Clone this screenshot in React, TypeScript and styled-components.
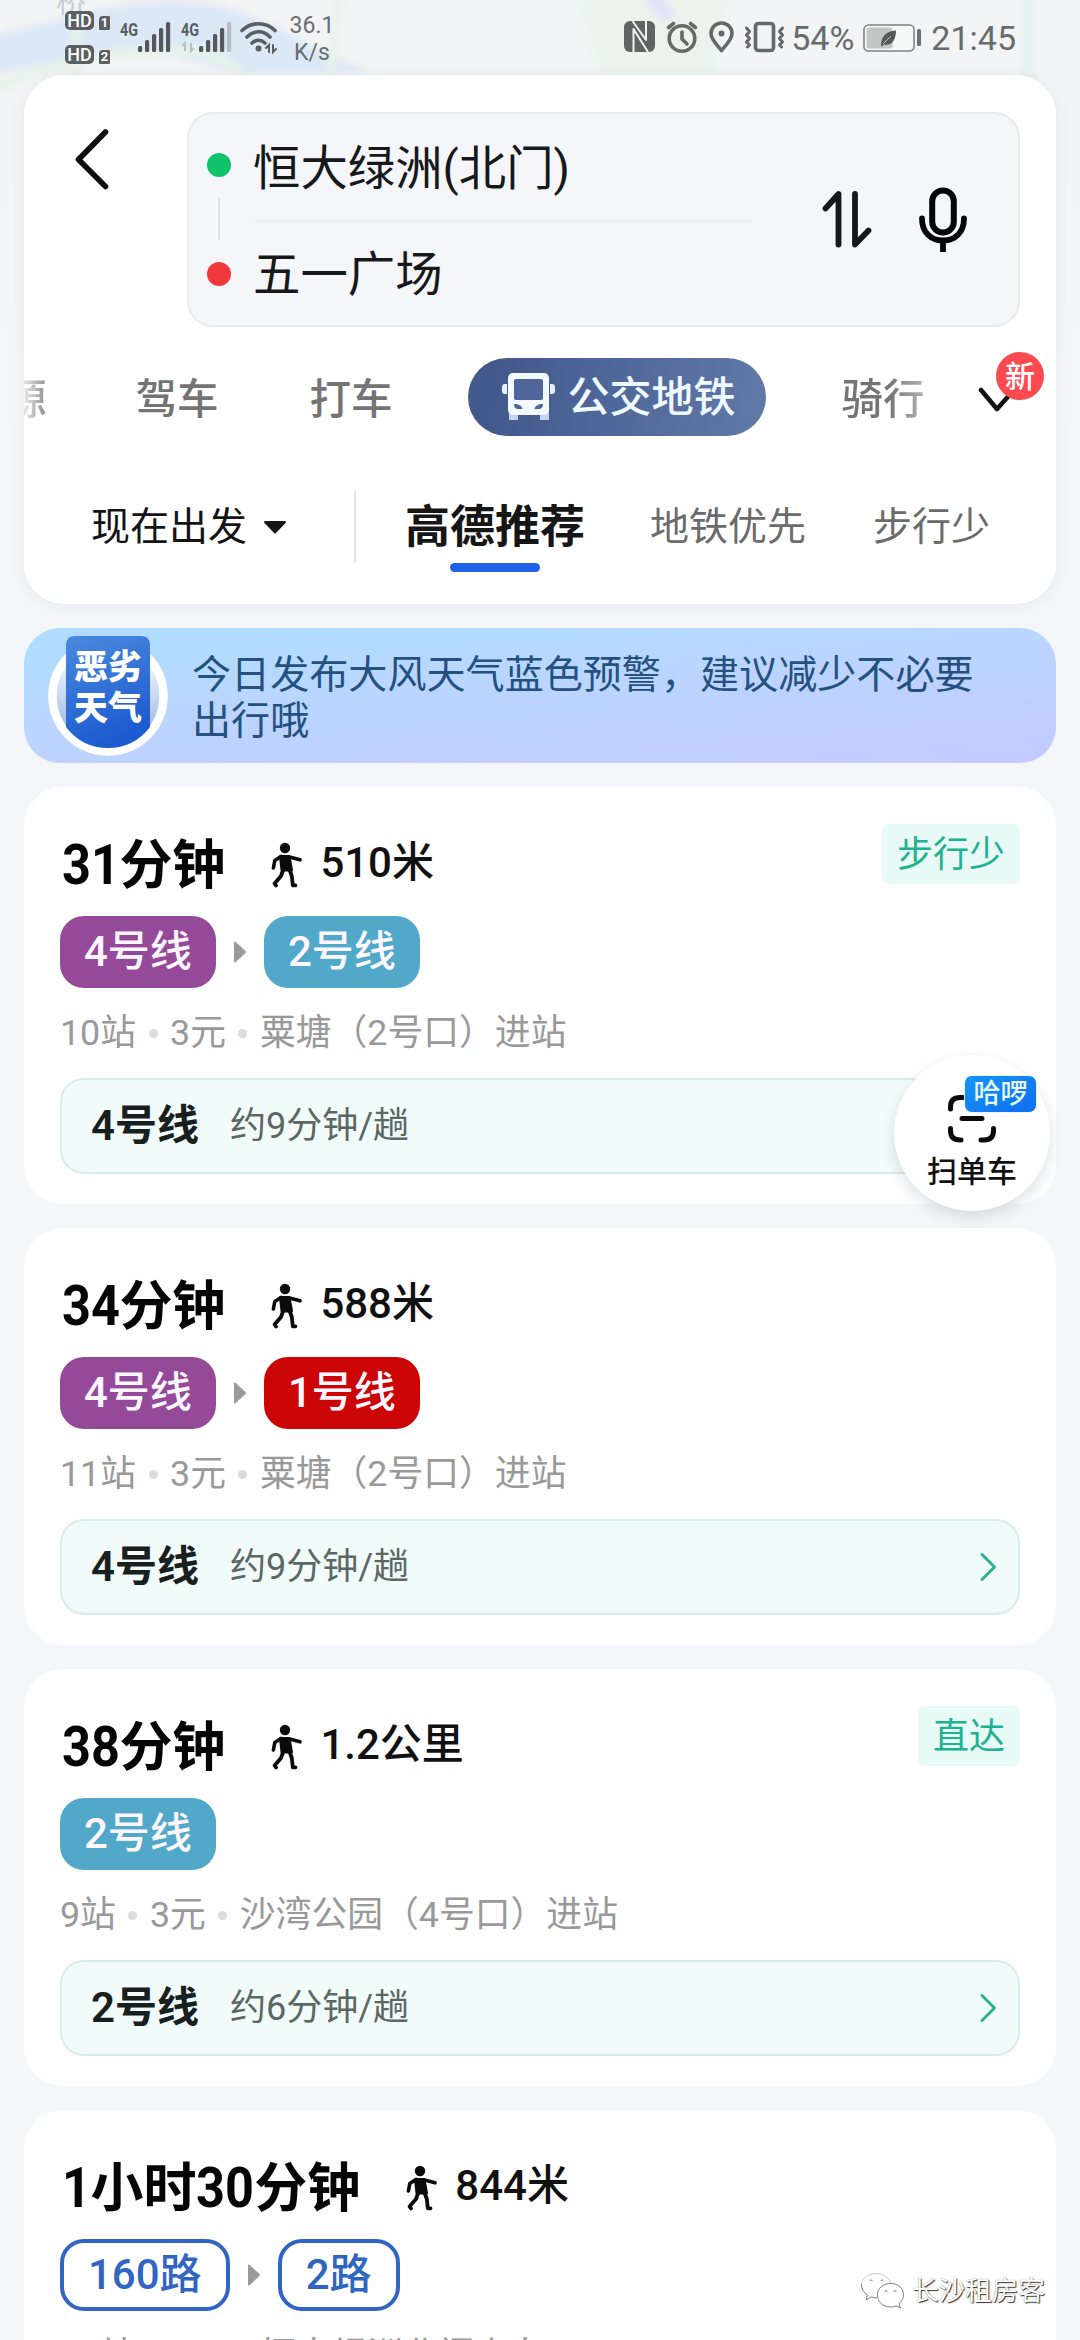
import React from "react";
import styled, { createGlobalStyle, css } from "styled-components";

const GlobalStyle = createGlobalStyle`
  * { box-sizing: border-box; }
  html, body { margin: 0; padding: 0; background: #f5f6f9; }
  body {
    font-family: Roboto, "Noto Sans CJK SC", sans-serif;
    color: #141416;
  }
  svg { display: block; flex: none; }
`;

const Screen = styled.main`
  position: relative;
  width: 1080px;
  height: 2340px;
  overflow: hidden;
  background: #f5f6f9;
  display: flex;
  flex-direction: column;
`;

const MapBackdrop = styled.svg`
  position: absolute;
  left: 0;
  top: 0;
`;

/* ---------- status bar ---------- */

const StatusBar = styled.header`
  position: relative;
  height: 75px;
  flex: none;
  display: flex;
  justify-content: space-between;
  padding: 0 64px 0 65px;
  color: #666b6c;
`;

const StatusGroup = styled.div<{ $left?: number; $right?: number; $gap?: number }>`
  display: flex;
  align-items: flex-start;
  gap: ${(p) => p.$gap ?? 0}px;
  margin-left: ${(p) => p.$left ?? 0}px;
  margin-right: ${(p) => p.$right ?? 0}px;
`;

const SimColumn = styled.div`
  display: flex;
  flex-direction: column;
  gap: 15px;
  padding-top: 11px;
`;

const SimRow = styled.div`
  display: flex;
  align-items: flex-end;
  gap: 5px;
`;

const HdTag = styled.span`
  width: 29px;
  height: 19px;
  border-radius: 5px;
  background: #5a5f61;
  color: #fff;
  font-size: 18px;
  font-weight: 500;
  line-height: 20px;
  text-align: center;
`;

const SimTag = styled.span`
  width: 11px;
  height: 14px;
  border-radius: 4px 1px 1px 1px;
  background: #5a5f61;
  color: #fff;
  font-size: 13px;
  font-weight: 700;
  line-height: 14px;
  text-align: center;
`;

const NetSpeed = styled.div`
  width: 46px;
  margin-left: 10px;
  padding-top: 12px;
  font-size: 23px;
  line-height: 27px;
  text-align: center;
  color: #6a6e70;
`;

const StatusText = styled.span`
  font-size: 34px;
  line-height: 40px;
  padding-top: 18px;
`;

/* ---------- header ---------- */

const HeaderCard = styled.section`
  position: relative;
  flex: none;
  height: 529px;
  margin: 0 24px;
  border-radius: 40px;
  background: #fff;
  box-shadow: 0 2px 14px rgba(60, 70, 90, 0.08);
  display: flex;
  flex-direction: column;
`;

const SearchRow = styled.div`
  display: flex;
  align-items: flex-start;
  padding: 37px 36px 0 51px;
`;

const BackButton = styled.button`
  border: 0;
  padding: 14px 0 0;
  margin-right: 76px;
  background: none;
`;

const RouteBox = styled.div`
  width: 833px;
  height: 215px;
  border: 2px solid #e9eaee;
  border-radius: 26px;
  background: #f5f6fa;
  display: flex;
  align-items: center;
  padding: 0 50px 0 18px;
`;

const EndpointMarks = styled.div`
  display: flex;
  flex-direction: column;
  align-items: center;
  width: 24px;
`;

const Dot = styled.i<{ $color: string }>`
  width: 24px;
  height: 24px;
  border-radius: 50%;
  background: ${(p) => p.$color};
`;

const DotLink = styled.i`
  width: 2px;
  height: 42px;
  margin: 21px 0 22px;
  background: #e0e2e6;
`;

const Endpoints = styled.div`
  width: 499px;
  margin-left: 22px;
`;

const Endpoint = styled.div`
  height: 108px;
  font-size: 47.4px;
  line-height: 114px;
  color: #17181a;
  & + & {
    border-top: 2px solid #eeeff3;
    line-height: 107px;
  }
`;

const BoxActions = styled.div`
  display: flex;
  align-items: center;
  gap: 46px;
  margin-left: auto;
`;

/* ---------- travel modes ---------- */

const ModeRow = styled.nav`
  display: flex;
  align-items: center;
  height: 78px;
  margin-top: 31px;
  overflow: hidden;
`;

const Mode = styled.span<{ $left?: number; $fade?: "left" | "right" }>`
  flex: none;
  margin-left: ${(p) => p.$left ?? 0}px;
  padding-top: 5px;
  font-size: 41.5px;
  font-weight: 500;
  line-height: 60px;
  color: #747474;
  white-space: nowrap;
  ${(p) =>
    p.$fade &&
    css`
      color: transparent;
      background: ${p.$fade === "left"
        ? "linear-gradient(90deg, #e0e0e0 50%, #8a8a8a)"
        : "linear-gradient(90deg, #747474 55%, #b4b4b4)"};
      background-clip: text;
      -webkit-background-clip: text;
    `}
`;

const ActiveMode = styled.span`
  flex: none;
  display: flex;
  align-items: center;
  gap: 12px;
  width: 298px;
  height: 78px;
  margin-left: 75px;
  padding-left: 33px;
  border-radius: 39px;
  background: linear-gradient(100deg, #43598c 10%, #6078a8 95%);
  color: #eef8ff;
  font-size: 42px;
  font-weight: 500;
  line-height: 81px;
`;

const MoreModes = styled.span`
  margin: 7px 0 0 53px;
`;

const NewBadge = styled.span`
  position: absolute;
  top: 277px;
  right: 12px;
  width: 48px;
  height: 48px;
  border-radius: 50%;
  background: #fb4b50;
  color: #fff;
  font-size: 30px;
  font-weight: 500;
  line-height: 49px;
  text-align: center;
`;

/* ---------- sort row ---------- */

const SortRow = styled.div`
  display: flex;
  align-items: center;
  height: 82px;
  margin-top: 50px;
  padding-left: 67px;
`;

const Departure = styled.span`
  display: flex;
  align-items: center;
  gap: 17px;
  width: 265px;
  height: 72px;
  border-right: 2px solid #e3e3e4;
  font-size: 39px;
  line-height: 75px;
`;

const SortOption = styled.span<{ $active?: boolean; $left: number }>`
  position: relative;
  margin-left: ${(p) => p.$left}px;
  font-size: ${(p) => (p.$active ? 45 : 39)}px;
  font-weight: ${(p) => (p.$active ? 700 : 400)};
  line-height: 85px;
  color: ${(p) => (p.$active ? "#161616" : "#6b6b6b")};
  ${(p) =>
    p.$active &&
    css`
      &::after {
        content: "";
        position: absolute;
        left: 50%;
        bottom: -2px;
        width: 90px;
        height: 9px;
        margin-left: -45px;
        border-radius: 5px;
        background: #1f62e8;
      }
    `}
`;

/* ---------- weather banner ---------- */

const Banner = styled.section`
  flex: none;
  display: flex;
  align-items: center;
  gap: 24px;
  height: 135px;
  margin: 24px 24px 0;
  padding-left: 24px;
  border-radius: 36px;
  background: linear-gradient(175deg, #b0ddff 8%, #bcd4ff 50%, #c1cbff 95%);
`;

const WeatherBadge = styled.div`
  position: relative;
  width: 120px;
  height: 120px;
`;

const WeatherWord = styled.div`
  position: absolute;
  left: 0;
  top: 11px;
  width: 120px;
  text-align: center;
  font-size: 34px;
  font-weight: 900;
  line-height: 41.5px;
  color: #fff;
`;

const BannerText = styled.p`
  margin: 4px 0 0;
  font-size: 39.1px;
  line-height: 46px;
  color: #24517f;
`;

/* ---------- route cards ---------- */

const RouteCard = styled.article`
  flex: none;
  height: 417px;
  margin: 24px 24px 0;
  padding: 49px 36px 30px;
  border-radius: 38px;
  background: #fefefe;
`;

const TitleRow = styled.div`
  display: flex;
  align-items: center;
  height: 60px;
`;

const Duration = styled.h2`
  margin: 0;
  padding: 0 0 1px 1.5px;
  display: flex;
  align-items: baseline;
  font-size: 53px;
  font-weight: 700;
  line-height: 60px;
  color: #050505;
`;

const Digits = styled.span<{ $count: number }>`
  display: inline-block;
  font-size: 56px;
  transform: scaleX(0.9);
  transform-origin: left;
  margin-right: ${(p) => p.$count * -3.2}px;
`;

const WalkDistance = styled.span`
  display: flex;
  align-items: center;
  gap: 18px;
  margin: -3px 0 0 46px;
  font-size: 42px;
  font-weight: 500;
  line-height: 56px;
  color: #111;
`;

const WalkLabel = styled.span`
  padding-bottom: 3px;
`;

const Lines = styled.div`
  display: flex;
  align-items: center;
  gap: 18px;
  margin-top: 20px;
`;

const LinePill = styled.span<{ $color: string; $outline?: boolean }>`
  height: 72px;
  padding: 0 24px;
  border-radius: 24px;
  font-size: 42px;
  font-weight: 500;
  line-height: 71px;
  color: #fdf6ff;
  background: ${(p) => p.$color};
  ${(p) =>
    p.$outline &&
    css`
      border: 4px solid ${p.$color};
      background: #fff;
      color: ${p.$color};
      line-height: 63px;
    `}
`;

const Details = styled.div`
  display: flex;
  align-items: center;
  gap: 12.5px;
  margin-top: 25px;
  height: 40px;
  font-size: 35.8px;
  line-height: 39px;
  color: #999;
  white-space: nowrap;
`;

const Bullet = styled.i`
  width: 9px;
  height: 9px;
  border-radius: 50%;
  background: #dcdcdc;
`;

const Headway = styled.div`
  display: flex;
  align-items: center;
  height: 96px;
  margin-top: 25px;
  padding: 0 18px 0 29px;
  border: 2px solid #d9ede8;
  border-radius: 24px;
  background: #f1fbf9;
`;

const HeadwayLine = styled.strong`
  font-size: 42px;
  font-weight: 600;
  line-height: 92px;
  color: #17201e;
`;

const HeadwayText = styled.span`
  flex: 1;
  margin-left: 31px;
  font-size: 36px;
  line-height: 92px;
  color: #5c6664;
`;

const CornerTag = styled.span`
  align-self: flex-start;
  margin: -12px 0 0 auto;
  height: 60px;
  padding: 0 15px;
  border-radius: 6px;
  background: #e8faf5;
  color: #20b191;
  font-size: 36px;
  line-height: 63px;
`;

/* ---------- floating pieces ---------- */

const ScanButton = styled.button`
  position: absolute;
  left: 894px;
  top: 1055px;
  width: 156px;
  height: 156px;
  padding: 40px 0 0;
  border: 0;
  border-radius: 50%;
  background: #fff;
  box-shadow: 0 6px 14px rgba(30, 40, 60, 0.14);
  display: flex;
  flex-direction: column;
  align-items: center;
  font-family: inherit;
`;

const ScanLabel = styled.span`
  margin-top: 9px;
  font-size: 30px;
  font-weight: 500;
  line-height: 40px;
  color: #111;
`;

const HelloBadge = styled.span`
  position: absolute;
  left: 70px;
  top: 20px;
  width: 73px;
  height: 38px;
  border: 1px solid #e6f6ff;
  border-radius: 8px;
  background: linear-gradient(150deg, #1495f5, #0f6df0);
  color: #e3fbff;
  font-size: 27px;
  font-weight: 500;
  line-height: 37px;
  text-align: center;
`;

const Watermark = styled.div`
  position: absolute;
  left: 860px;
  top: 2269px;
  display: flex;
  align-items: center;
  gap: 8px;
  font-size: 26.6px;
  line-height: 44px;
  color: #fff;
  text-shadow: 1px 1px 1px #333, 0 0 1px #777;
`;

/* ---------- icons ---------- */

const SignalIcon = ({ weak }: { weak?: boolean }) => (
  <svg width="54" height="56" viewBox="0 0 54 56">
    <text x="0" y="36" fontFamily="Roboto" fontWeight="700" fontSize="19" textLength="18" lengthAdjust="spacingAndGlyphs" fill="#5a5f61">4G</text>
    {weak && <path d="M4 51V43L1 46M10 43v8l3-3" stroke="#bcc0c2" strokeWidth="2" fill="none" />}
    <g fill="#55595c">
      <rect x="18" y="46" width="4.2" height="6" rx="1.5" />
      <rect x="25" y="40" width="4.2" height="12" rx="1.5" />
      <rect x="32" y="34" width="4.2" height="18" rx="1.5" />
      <rect x="39" y="28" width="4.2" height="24" rx="1.5" />
      <rect x="46" y="22" width="4.2" height="30" rx="1.5" fill={weak ? "#b9bcbf" : "#55595c"} />
    </g>
  </svg>
);

const WifiIcon = () => (
  <svg width="40" height="56" viewBox="0 0 40 56" fill="none" stroke="#5a5f61" strokeWidth="3.6" strokeLinecap="round">
    <path d="M3 30.5C12 21.5 27 21.5 36 30.5" />
    <path d="M8 37C15 30 24.5 30 31 37" />
    <path d="M13 43C17 39.5 22 39.5 26 43" />
    <circle cx="19.5" cy="48.5" r="3" fill="#5a5f61" stroke="none" />
    <path d="M30 52v-7l-3 3M34 45v7l3-3" strokeWidth="2" />
  </svg>
);

const StatusIcons = () => (
  <svg width="167" height="60" viewBox="626 0 167 60" fill="none" stroke="#636a67" strokeWidth="3.6" strokeLinecap="round" strokeLinejoin="round">
    <rect x="626" y="21" width="31" height="31" rx="6" fill="#5e6562" stroke="none" />
    <path d="M634.5 21L648 40V21" stroke="#f1f5f4" strokeWidth="2" strokeLinecap="butt" />
    <path d="M635.5 52V29L650 52" stroke="#f1f5f4" strokeWidth="2" strokeLinecap="butt" />
    <circle cx="684" cy="38.5" r="12.8" />
    <path d="M684 32v7l5 5M670.5 27.5l5-4M697.5 27.5l-5-4" />
    <path d="M723.5 50.5C719 45 713 39.5 713 33.5a10.5 10.5 0 0 1 21 0c0 6-6 11.5-10.5 17z" />
    <circle cx="723.5" cy="33.5" r="3" fill="#636a67" stroke="none" />
    <rect x="757.5" y="23.5" width="18" height="27" rx="3" />
    <path d="M748.5 28l3 3.5-3 3.5 3 3.5-3 3.5 3 3-2 2M784.5 28l-3 3.5 3 3.5-3 3.5 3 3.5-3 3 2 2" strokeWidth="3" />
  </svg>
);

const BatteryIcon = () => (
  <svg width="60" height="60" viewBox="0 0 60 60">
    <rect x="1" y="25" width="50" height="26" rx="4.5" fill="#f8fafa" stroke="#7c8381" strokeWidth="1.6" />
    <rect x="3.5" y="27.5" width="26" height="21" rx="2" fill="#c3c6c5" />
    <path d="M18 46c0-9 4-14.5 15-15.500 0 9-4 16-12.5 14l-1.5 2z" fill="#555b58" />
    <path d="M20 44l8-8" stroke="#b9bcbb" strokeWidth="1" />
    <rect x="54" y="29" width="4" height="17" rx="1.5" fill="#6a716f" />
  </svg>
);

const BackIcon = () => (
  <svg width="36" height="66" viewBox="0 0 36 66" fill="none" stroke="#0e0e0f" strokeWidth="5.6" strokeLinecap="round" strokeLinejoin="round">
    <path d="M30.5 6L3.5 33.5 30.5 60.5" />
  </svg>
);

const SwapIcon = () => (
  <svg width="50" height="60" viewBox="0 0 50 60" fill="none" stroke="#17181b" strokeWidth="5.8" strokeLinecap="round" strokeLinejoin="round">
    <path d="M3.5 18.5L16.5 4V54.5M33 4V54.5L46.5 40.5" />
  </svg>
);

const MicIcon = () => (
  <svg width="50" height="68" viewBox="0 0 50 68" fill="none" stroke="#050507" strokeLinecap="round">
    <rect x="14.2" y="4.5" width="21.6" height="42" rx="10.8" strokeWidth="6" />
    <path d="M4 32.5c0 14 9 22 21 22s21-8 21-22" strokeWidth="5.8" />
    <path d="M25 55v11" strokeWidth="5.8" strokeLinecap="butt" />
  </svg>
);

const BusIcon = () => (
  <svg width="55" height="50" viewBox="0 0 55 50">
    <path d="M8 38h9v10H8zM39 38h9v10h-9z" fill="#c3d3f0" />
    <rect x="7" y="1" width="41" height="42" rx="5" fill="#f3faff" />
    <path d="M6 12v10H4q-3 0-3-3v-4q0-3 3-3zM49 12v10h2q3 0 3-3v-4q0-3-3-3z" fill="#e6f1ff" />
    <rect x="13" y="7" width="29" height="21" rx="2" fill="#50659a" />
    <path d="M13 32c5 0 8 2 8.500 5H16q-3-1-3-5zM42 32c-5 0-8 2-8.500 5H39q3-1 3-5z" fill="#50659a" />
  </svg>
);

const WalkIcon = () => (
  <svg width="31" height="46" viewBox="0 0 31 46" fill="none" stroke="#0b0b0b" strokeLinecap="round" strokeLinejoin="round">
    <circle cx="14" cy="6" r="5.200" fill="#0b0b0b" stroke="none" />
    <path d="M9.500 14.500L18 14.500 20.500 28 11 28Z" fill="#0b0b0b" strokeWidth="3" />
    <path d="M10 14.500L3.800 18.500 2.400 26" strokeWidth="3.600" />
    <path d="M17.500 14.800L29 17.800" strokeWidth="3.600" />
    <path d="M12.500 27L10 34 3.600 41.500 5 43.500" strokeWidth="3.800" />
    <path d="M18.500 27.500L20.800 34 21.800 43.300H24.500" strokeWidth="3.800" />
  </svg>
);

const LineArrow = () => (
  <svg width="12" height="22" viewBox="0 0 12 22">
    <path d="M0 1.5Q0 0 1.5 .8L11.5 10q.8 1 0 2L1.5 21.200Q0 22 0 20.500Z" fill="#9a9a9a" />
  </svg>
);

const ChevronRight = () => (
  <svg width="22" height="32" viewBox="0 0 22 32" fill="none" stroke="#2fae96" strokeWidth="3" strokeLinecap="round" strokeLinejoin="round">
    <path d="M4 3.5L16.5 16 4 28.5" />
  </svg>
);

const WeatherShield = () => (
  <svg width="120" height="120" viewBox="0 0 120 120">
    <defs>
      <linearGradient id="ring" x1="0" y1="0" x2="0" y2="1">
        <stop offset="0.2" stopColor="#eef6ff" />
        <stop offset="0.75" stopColor="#a9bde6" />
      </linearGradient>
      <linearGradient id="shield" x1="0" y1="0" x2="0.3" y2="1">
        <stop offset="0" stopColor="#4b8ade" />
        <stop offset="1" stopColor="#1d5bd0" />
      </linearGradient>
    </defs>
    <circle cx="60" cy="60" r="55.5" fill="url(#ring)" stroke="#fff" strokeWidth="8.5" />
    <path d="M18 9q0-9 9-9H93q9 0 9 9V91Q86 112 60 112T18 91Z" fill="url(#shield)" />
  </svg>
);

const ScanIcon = () => (
  <svg width="50" height="48" viewBox="0 0 50 48" fill="none" stroke="#0a0a0a" strokeWidth="5" strokeLinecap="round">
    <path d="M3.5 14v-2q0-9.5 9.5-9.500h3M34 2.500h3q9.500 0 9.500 9.500v2M3.500 33.500v2q0 9.500 9.500 9.500h1M46.500 33.500v2q0 9.500-9.500 9.500h-3M15 23.500h20" />
  </svg>
);

const WechatIcon = () => (
  <svg width="44" height="40" viewBox="0 0 44 40" fill="#fff" stroke="#808080" strokeWidth="1">
    <path d="M6 29l1.500-5C3 21 1 17 1.500 13 3 6 9 2.500 16 2.500S30 7 31 13" stroke="#c9c9c9" fill="none" />
    <path d="M1.500 13c0 5 2 8.500 6 11L6 29l5-3 6 1" />
    <path d="M30.500 12.500c-8 0-13 5-13 11.500s5 12 13 12c2 0 4-.3 5.500-1l4.500 2-1.500-4.500c3-2.500 4.500-5 4.500-8.500 0-6.500-5-11.500-13-11.500z" />
    <path d="M9.500 10q1.500-2.500 3 0M20.500 10q1.500-2.500 3 0M24.500 20.500q1.500-2 3 0M33.500 20.500q1.500-2 3 0" fill="none" />
  </svg>
);

/* ---------- data ---------- */

type RouteLine = { name: string; color: string; outline?: boolean };
type Route = {
  duration: [string, string][];
  walk: string;
  lines: RouteLine[];
  details: string[];
  headway?: [string, string];
  tag?: string;
};

const PURPLE = "#954a99";
const CYAN = "#51a8c9";
const RED = "#cb0505";
const BLUE = "#3065c4";

const routes: Route[] = [
  {
    duration: [["31", "分钟"]],
    walk: "510米",
    lines: [{ name: "4号线", color: PURPLE }, { name: "2号线", color: CYAN }],
    details: ["10站", "3元", "粟塘（2号口）进站"],
    headway: ["4号线", "约9分钟/趟"],
    tag: "步行少",
  },
  {
    duration: [["34", "分钟"]],
    walk: "588米",
    lines: [{ name: "4号线", color: PURPLE }, { name: "1号线", color: RED }],
    details: ["11站", "3元", "粟塘（2号口）进站"],
    headway: ["4号线", "约9分钟/趟"],
  },
  {
    duration: [["38", "分钟"]],
    walk: "1.2公里",
    lines: [{ name: "2号线", color: CYAN }],
    details: ["9站", "3元", "沙湾公园（4号口）进站"],
    headway: ["2号线", "约6分钟/趟"],
    tag: "直达",
  },
  {
    duration: [["1", "小时"], ["30", "分钟"]],
    walk: "844米",
    lines: [
      { name: "160路", color: BLUE, outline: true },
      { name: "2路", color: BLUE, outline: true },
    ],
    details: ["26站", "4元", "恒大绿洲北门上车"],
  },
];

const RouteItem = ({ route }: { route: Route }) => (
  <RouteCard>
    <TitleRow>
      <Duration>
        {route.duration.map(([value, unit]) => (
          <React.Fragment key={unit}>
            <Digits $count={value.length}>{value}</Digits>
            <span>{unit}</span>
          </React.Fragment>
        ))}
      </Duration>
      <WalkDistance>
        <WalkIcon />
        <WalkLabel>{route.walk}</WalkLabel>
      </WalkDistance>
      {route.tag && <CornerTag>{route.tag}</CornerTag>}
    </TitleRow>
    <Lines>
      {route.lines.map((line, i) => (
        <React.Fragment key={line.name}>
          {i > 0 && <LineArrow />}
          <LinePill $color={line.color} $outline={line.outline}>{line.name}</LinePill>
        </React.Fragment>
      ))}
    </Lines>
    <Details>
      {route.details.map((text, i) => (
        <React.Fragment key={text}>
          {i > 0 && <Bullet />}
          <span>{text}</span>
        </React.Fragment>
      ))}
    </Details>
    {route.headway && (
      <Headway>
        <HeadwayLine>{route.headway[0]}</HeadwayLine>
        <HeadwayText>{route.headway[1]}</HeadwayText>
        <ChevronRight />
      </Headway>
    )}
  </RouteCard>
);

export default function App() {
  return (
    <>
      <GlobalStyle />
      <Screen>
        <MapBackdrop width="1080" height="480" viewBox="0 0 1080 480">
          <defs>
            <linearGradient id="mapFade" x1="0" y1="0" x2="0" y2="1">
              <stop offset="0" stopColor="#f5f6f9" stopOpacity="0" />
              <stop offset="1" stopColor="#f5f6f9" />
            </linearGradient>
            <filter id="soft"><feGaussianBlur stdDeviation="3" /></filter>
          </defs>
          <rect width="1080" height="480" fill="#f2f4f5" />
          <g filter="url(#soft)">
            <path d="M-10 35C60 25 100 0 180 2s110 40 190 70H230C150 40 90 55-10 75Z" fill="#dde8f6" />
            <path d="M-10 90C60 60 120 50 170 50s60 15 80 30" fill="none" stroke="#e6f3ea" strokeWidth="9" />
            <path d="M76 20V80M330 80L340-5" stroke="#e7f3ea" strokeWidth="8" />
            <path d="M575-5h160q-20 40-20 80H600Z" fill="#eaf4ec" />
            <path d="M650-5l20 22" stroke="#dfe3fa" strokeWidth="14" />
            <path d="M1028-5v95" stroke="#e2f2ee" strokeWidth="13" />
          </g>
          <text x="56" y="12" fontSize="30" fill="#c9cdd0" fontFamily="Noto Sans CJK SC">桥</text>
          <rect y="100" width="1080" height="380" fill="url(#mapFade)" />
        </MapBackdrop>

        <StatusBar>
          <StatusGroup>
            <SimColumn>
              <SimRow><HdTag>HD</HdTag><SimTag>1</SimTag></SimRow>
              <SimRow><HdTag>HD</HdTag><SimTag>2</SimTag></SimRow>
            </SimColumn>
            <StatusGroup $left={10} $gap={7}>
              <SignalIcon />
              <SignalIcon weak />
            </StatusGroup>
            <StatusGroup $left={4}>
              <WifiIcon />
            </StatusGroup>
            <NetSpeed>36.1<br />K/s</NetSpeed>
          </StatusGroup>
          <StatusGroup>
            <StatusIcons />
            <StatusText>54%</StatusText>
            <StatusGroup $left={9} $right={8}>
              <BatteryIcon />
            </StatusGroup>
            <StatusText>21:45</StatusText>
          </StatusGroup>
        </StatusBar>

        <HeaderCard>
          <SearchRow>
            <BackButton><BackIcon /></BackButton>
            <RouteBox>
              <EndpointMarks>
                <Dot $color="#10c36c" />
                <DotLink />
                <Dot $color="#f1393c" />
              </EndpointMarks>
              <Endpoints>
                <Endpoint>恒大绿洲(北门)</Endpoint>
                <Endpoint>五一广场</Endpoint>
              </Endpoints>
              <BoxActions>
                <SwapIcon />
                <MicIcon />
              </BoxActions>
            </RouteBox>
          </SearchRow>

          <ModeRow>
            <Mode $left={-19} $fade="left">源</Mode>
            <Mode $left={89}>驾车</Mode>
            <Mode $left={91}>打车</Mode>
            <ActiveMode><BusIcon />公交地铁</ActiveMode>
            <Mode $left={76} $fade="right">骑行</Mode>
            <MoreModes>
              <svg width="38" height="28" viewBox="0 0 38 28" fill="none" stroke="#111" strokeWidth="4.6" strokeLinecap="round" strokeLinejoin="round">
                <path d="M3 3L19 22 35 4" />
              </svg>
            </MoreModes>
          </ModeRow>
          <NewBadge>新</NewBadge>

          <SortRow>
            <Departure>
              现在出发
              <svg width="22" height="13" viewBox="0 0 22 13">
                <path d="M1 0H21q1.500 .5 .5 2L12 12q-1 1-2 0L.5 2Q-.5 .5 1 0Z" fill="#151515" />
              </svg>
            </Departure>
            <SortOption $active $left={49}>高德推荐</SortOption>
            <SortOption $left={65}>地铁优先</SortOption>
            <SortOption $left={67}>步行少</SortOption>
          </SortRow>
        </HeaderCard>

        <Banner>
          <WeatherBadge>
            <WeatherShield />
            <WeatherWord>恶劣<br />天气</WeatherWord>
          </WeatherBadge>
          <BannerText>
            今日发布大风天气蓝色预警，建议减少不必要<br />出行哦
          </BannerText>
        </Banner>

        {routes.map((route) => (
          <RouteItem key={route.walk} route={route} />
        ))}

        <ScanButton>
          <ScanIcon />
          <HelloBadge>哈啰</HelloBadge>
          <ScanLabel>扫单车</ScanLabel>
        </ScanButton>

        <Watermark>
          <WechatIcon />
          长沙租房客
        </Watermark>
      </Screen>
    </>
  );
}
